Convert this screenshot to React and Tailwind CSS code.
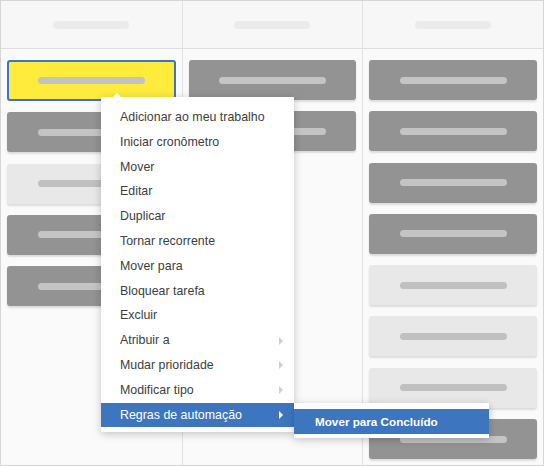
import React from "react";

//colunas do quadro
const columns = [
    ["selected", "dark", "light", "dark", "dark"],
    ["dark", "dark"],
    ["dark", "dark", "dark", "dark", "light", "light", "light", "dark"],
];

const menuItems = [
    { label: "Adicionar ao meu trabalho" },
    { label: "Iniciar cronômetro" },
    { label: "Mover" },
    { label: "Editar" },
    { label: "Duplicar" },
    { label: "Tornar recorrente" },
    { label: "Mover para" },
    { label: "Bloquear tarefa" },
    { label: "Excluir" },
    { label: "Atribuir a", sub: true },
    { label: "Mudar prioridade", sub: true },
    { label: "Modificar tipo", sub: true },
    { label: "Regras de automação", sub: true, active: true },
];

const Card = ({ kind }) => {
    if (kind === "selected") {
        return (
            <div className="h-[41px] rounded-[3px] border-2 border-[#3b74c2] bg-[#ffeb3b] flex items-center justify-center">
                <span className="w-[107px] h-[7px] rounded-full bg-[#c2c2c2]"></span>
            </div>
        );
    }
    return (
        <div
            className={`h-[40px] rounded-[3px] shadow-[0_2px_2px_rgba(0,0,0,0.12)] flex items-center justify-center ${
                kind === "dark" ? "bg-[#939393]" : "bg-[#e8e8e8]"
            }`}
        >
            <span
                className={`w-[107px] h-[7px] rounded-full ${
                    kind === "dark" ? "bg-[#c4c4c4]" : "bg-[#c0c0c0]"
                }`}
            ></span>
        </div>
    );
};

const Arrow = ({ white }) => (
    <span
        className={`w-0 h-0 border-y-[4px] border-y-transparent border-l-[4px] ${
            white ? "border-l-white" : "border-l-[#cfcfcf]"
        }`}
    ></span>
);

const App = () => {
    return (
        <div
            className="relative w-[544px] h-[466px] overflow-hidden border border-[#d6d6d6] bg-[#fafafa]"
            style={{ fontFamily: '"Liberation Sans", Arial, sans-serif' }}
        >
            <div className="grid grid-cols-3 h-full">
                {columns.map((cards, i) => (
                    <div
                        key={i}
                        className={`flex flex-col ${i > 0 ? "border-l border-[#e2e2e2]" : ""}`}
                    >
                        {/* Cabeçalho */}
                        <div className="h-[48px] shrink-0 bg-[#f7f7f7] border-b border-[#dedede] flex items-center justify-center">
                            <span className="w-[76px] h-[8px] rounded-full bg-[#ebebeb]"></span>
                        </div>
                        {/* Cartões */}
                        <div className="flex flex-col gap-[11.3px] pt-[11px] pl-[6px] pr-[6px]">
                            {cards.map((kind, j) => (
                                <Card key={j} kind={kind} />
                            ))}
                        </div>
                    </div>
                ))}
            </div>

            {/* Menu de contexto */}
            <div className="absolute left-[100px] top-[96px] w-[193px] bg-white pt-[8px] pb-[5px] shadow-[0_2px_8px_rgba(0,0,0,0.22)]">
                <span className="absolute -top-[4px] left-[12px] w-0 h-0 border-x-[4px] border-x-transparent border-b-[4px] border-b-white"></span>
                {menuItems.map((item) => (
                    <div
                        key={item.label}
                        className={`h-[24.8px] pl-[19px] pr-[11px] flex items-center justify-between text-[12.4px] ${
                            item.active ? "bg-[#3d76bf] text-white" : "text-[#404040]"
                        }`}
                    >
                        <span>{item.label}</span>
                        {item.sub && <Arrow white={item.active} />}
                    </div>
                ))}
            </div>

            {/* Submenu */}
            <div className="absolute left-[293px] top-[402px] w-[195px] bg-white pt-[6px] pb-[4px] shadow-[0_2px_8px_rgba(0,0,0,0.22)]">
                <div className="h-[25px] pl-[21px] flex items-center bg-[#3d76bf] text-white font-bold text-[11.7px]">
                    Mover para Concluído
                </div>
            </div>
        </div>
    );
};

export default App;
